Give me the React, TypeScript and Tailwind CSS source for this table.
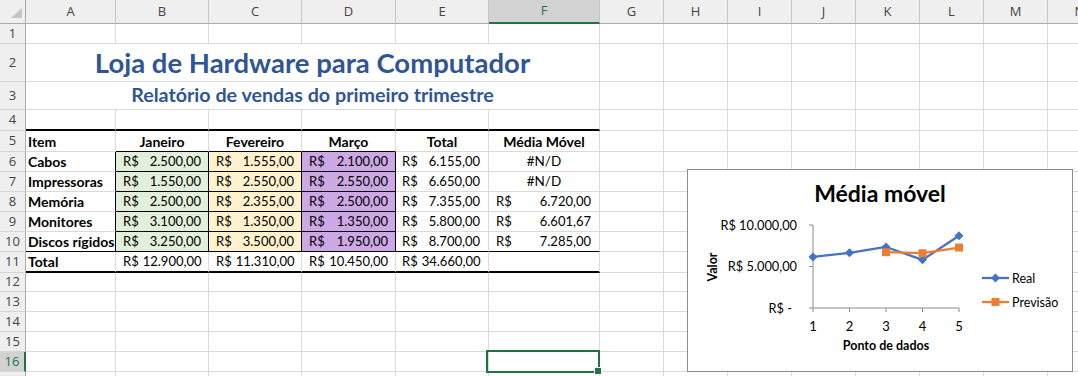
import React from 'react';
import { twMerge } from 'tailwind-merge';

const W = [
  'w-[90px]',
  'w-[93px]',
  'w-[93px]',
  'w-[94px]',
  'w-[93px]',
  'w-[111px]',
  'w-[64px]',
  'w-[64px]',
  'w-[64px]',
  'w-[64px]',
  'w-[64px]',
  'w-[64px]',
  'w-[64px]',
  'w-[64px]',
];
const LETTERS = ['A', 'B', 'C', 'D', 'E', 'F', 'G', 'H', 'I', 'J', 'K', 'L', 'M', 'N'];

function Cell({ i, className, children }: { i: number; className?: string; children?: React.ReactNode }) {
  return (
    <div
      className={twMerge(
        'shrink-0 h-full box-border border-r border-b border-r-[#DADADA] border-b-[#DADADA] overflow-hidden whitespace-nowrap flex items-center text-[14px] text-black',
        W[i],
        className
      )}
    >
      {children}
    </div>
  );
}

function RowHead({ n, sel }: { n: number; sel?: boolean }) {
  return (
    <div
      className={twMerge(
        'shrink-0 w-[26px] h-full box-border border-r border-b border-r-[#ABABAB] border-b-[#D4D4D4] bg-[#EFEFEF] flex items-center justify-center text-[13px] text-[#444] font-[family-name:Open_Sans,sans-serif]',
        sel ? 'bg-[#D2D2D2] border-r-2 border-r-[#217346] text-[#217346]' : ''
      )}
    >
      {n}
    </div>
  );
}

function Rest({ from }: { from: number }) {
  const out: React.ReactNode[] = [];
  for (let i = from; i < 14; i++) out.push(<Cell key={i} i={i} />);
  return <>{out}</>;
}

function Row({ n, h, children, sel, from = 0 }: { n: number; h: string; children?: React.ReactNode; sel?: boolean; from?: number }) {
  return (
    <div className={twMerge('flex shrink-0', h)}>
      <RowHead n={n} sel={sel} />
      {children}
      <Rest from={from} />
    </div>
  );
}

function Money({ v, className }: { v: string; className?: string }) {
  return (
    <div className={twMerge('flex w-full justify-between gap-[4px] pl-[7px] pr-[7px] text-[13px]', className)}>
      <span>R$</span>
      <span>{v}</span>
    </div>
  );
}

const GREEN = 'bg-[#E2EFDA] border-r-black border-b-black';
const YELLOW = 'bg-[#FFF2CC] border-r-black border-b-black';
const PURPLE = 'bg-[#CCA8E4] border-r-black border-b-black';

type DataRow = { label: string; b: string; c: string; d: string; e: string; f: string | null };

const DATA: DataRow[] = [
  { label: 'Cabos', b: '2.500,00', c: '1.555,00', d: '2.100,00', e: '6.155,00', f: null },
  { label: 'Impressoras', b: '1.550,00', c: '2.550,00', d: '2.550,00', e: '6.650,00', f: null },
  { label: 'Memória', b: '2.500,00', c: '2.355,00', d: '2.500,00', e: '7.355,00', f: '6.720,00' },
  { label: 'Monitores', b: '3.100,00', c: '1.350,00', d: '1.350,00', e: '5.800,00', f: '6.601,67' },
  { label: 'Discos rígidos', b: '3.250,00', c: '3.500,00', d: '1.950,00', e: '8.700,00', f: '7.285,00' },
];

function Chart() {
  const xs = [126, 162.5, 199, 235.5, 272];
  const yOf = (v: number) => 139 - (v * 83) / 10000;
  const real = [6155, 6650, 7355, 5800, 8700];
  const fc = [6720, 6601.67, 7285];
  const realPts = real.map((v, i) => `${xs[i]},${yOf(v)}`).join(' ');
  const fcPts = fc.map((v, i) => `${xs[i + 2]},${yOf(v)}`).join(' ');
  const diamond = (x: number, y: number, k: string) => (
    <polygon key={k} points={`${x},${y - 4.5} ${x + 4.5},${y} ${x},${y + 4.5} ${x - 4.5},${y}`} fill="#4472C4" />
  );
  const square = (x: number, y: number, k: string) => (
    <rect key={k} x={x - 4} y={y - 4} width={8} height={8} fill="#ED7D31" />
  );
  const font = 'Lato, sans-serif';
  return (
    <div className="absolute left-[687px] top-[169px] w-[386px] h-[203px] border border-[#8C8C8C] bg-white">
      <svg width={386} height={203} className="absolute -left-px -top-px overflow-visible">
        <text x={193} y={33} textAnchor="middle" fontFamily={font} fontWeight={700} fontSize={23} fill="#000">
          Média móvel
        </text>
        {/* axes */}
        <line x1={126} y1={56} x2={126} y2={139} stroke="#8C8C8C" strokeWidth={1} />
        <line x1={126} y1={139} x2={272} y2={139} stroke="#8C8C8C" strokeWidth={1} />
        {[56, 97.5, 139].map((y) => (
          <line key={y} x1={122} y1={y} x2={126} y2={y} stroke="#8C8C8C" strokeWidth={1} />
        ))}
        {xs.map((x) => (
          <line key={x} x1={x} y1={139} x2={x} y2={143} stroke="#8C8C8C" strokeWidth={1} />
        ))}
        {/* y labels */}
        <text x={110} y={60.5} textAnchor="end" fontFamily={font} fontSize={12.8} fill="#000">
          R$ 10.000,00
        </text>
        <text x={110} y={102} textAnchor="end" fontFamily={font} fontSize={12.8} fill="#000">
          R$ 5.000,00
        </text>
        <text x={105} y={143.5} textAnchor="end" fontFamily={font} fontSize={12.8} fill="#000">
          R$ -
        </text>
        {xs.map((x, i) => (
          <text key={i} x={x} y={161.5} textAnchor="middle" fontFamily={font} fontSize={13} fill="#000">
            {i + 1}
          </text>
        ))}
        <text x={199} y={181} textAnchor="middle" fontFamily={font} fontWeight={700} fontSize={12.5} fill="#000">
          Ponto de dados
        </text>
        <text
          x={30}
          y={98}
          textAnchor="middle"
          fontFamily={font}
          fontWeight={700}
          fontSize={12.5}
          fill="#000"
          transform="rotate(-90 30 98)"
        >
          Valor
        </text>
        {/* series */}
        <polyline points={realPts} fill="none" stroke="#4472C4" strokeWidth={2.25} strokeLinejoin="round" />
        <polyline points={fcPts} fill="none" stroke="#ED7D31" strokeWidth={2.25} strokeLinejoin="round" />
        {real.map((v, i) => diamond(xs[i], yOf(v), 'r' + i))}
        {fc.map((v, i) => square(xs[i + 2], yOf(v), 'f' + i))}
        {/* legend */}
        <line x1={295} y1={109} x2={322} y2={109} stroke="#4472C4" strokeWidth={2.25} />
        {diamond(308.5, 109, 'lg1')}
        <text x={325} y={113.5} fontFamily={font} fontSize={12.5} fill="#000">
          Real
        </text>
        <line x1={295} y1={133} x2={322} y2={133} stroke="#ED7D31" strokeWidth={2.25} />
        {square(308.5, 133, 'lg2')}
        <text x={325} y={137.5} fontFamily={font} fontSize={12.5} fill="#000">
          Previsão
        </text>
      </svg>
    </div>
  );
}

export default function App() {
  return (
    <div className="relative w-[1078px] h-[376px] overflow-hidden bg-white font-[family-name:Lato,sans-serif]">
      <div className="flex flex-col">
        {/* column header */}
        <div className="flex h-[24px] shrink-0">
          <div className="relative shrink-0 w-[26px] h-full box-border border-r border-b border-[#ABABAB] bg-[#EFEFEF]">
            <svg width={26} height={24} className="absolute left-0 top-0">
              <polygon points="22,8 22,18 11,18" fill="#C4C4C4" />
            </svg>
          </div>
          {LETTERS.map((l, i) => (
            <div
              key={l}
              className={twMerge(
                'shrink-0 h-full box-border border-r border-b border-r-[#C6C6C6] border-b-[#ABABAB] bg-[#EFEFEF] flex items-center justify-center text-[13px] text-[#444] font-[family-name:Open_Sans,sans-serif]',
                W[i],
                l === 'F' ? 'bg-[#D2D2D2] border-b-2 border-b-[#217346] text-[#217346]' : ''
              )}
            >
              {l}
            </div>
          ))}
        </div>

        <Row n={1} h="h-[20px]" />

        <Row n={2} h="h-[38px]" from={6}>
          <div className="shrink-0 w-[574px] h-full box-border border-r border-b border-r-[#DADADA] border-b-[#DADADA] flex items-end justify-center pb-[2px]">
            <span className="text-[27.5px] leading-none font-bold text-[#2F5597] pb-[3px]">Loja de Hardware para Computador</span>
          </div>
        </Row>

        <Row n={3} h="h-[28px]" from={6}>
          <div className="shrink-0 w-[574px] h-full box-border border-r border-b border-r-[#DADADA] border-b-[#DADADA] flex items-end justify-center">
            <span className="text-[19.7px] leading-none font-bold text-[#2F5597] pb-[4px]">Relatório de vendas do primeiro trimestre</span>
          </div>
        </Row>

        <Row n={4} h="h-[21px]" from={6}>
          {[0, 1, 2, 3, 4, 5].map((i) => (
            <Cell key={i} i={i} className="border-b-2 border-b-black" />
          ))}
        </Row>

        <Row n={5} h="h-[21px]" from={6}>
          <Cell i={0} className="font-bold pl-[2px]">
            Item
          </Cell>
          <Cell i={1} className="font-bold justify-center border-b-black">
            Janeiro
          </Cell>
          <Cell i={2} className="font-bold justify-center border-b-black">
            Fevereiro
          </Cell>
          <Cell i={3} className="font-bold justify-center border-b-black">
            Março
          </Cell>
          <Cell i={4} className="font-bold justify-center">
            Total
          </Cell>
          <Cell i={5} className="font-bold justify-center">
            Média Móvel
          </Cell>
        </Row>

        {DATA.map((r, idx) => {
          const last = idx === DATA.length - 1;
          const bb = last ? 'border-b-black' : '';
          return (
            <Row key={r.label} n={6 + idx} h="h-[20px]" from={6}>
              <Cell i={0} className={twMerge('font-bold pl-[2px] border-r-black', bb)}>
                {r.label}
              </Cell>
              <Cell i={1} className={GREEN}>
                <Money v={r.b} />
              </Cell>
              <Cell i={2} className={YELLOW}>
                <Money v={r.c} />
              </Cell>
              <Cell i={3} className={PURPLE}>
                <Money v={r.d} />
              </Cell>
              <Cell i={4} className={bb}>
                <Money v={r.e} className="pl-[6px] pr-[8px]" />
              </Cell>
              <Cell i={5} className={twMerge(r.f ? '' : 'justify-center', bb)}>
                {r.f ? <Money v={r.f} className="pr-[8px]" /> : <span className="text-[13.5px]">#N/D</span>}
              </Cell>
            </Row>
          );
        })}

        <Row n={11} h="h-[21px]" from={6}>
          <Cell i={0} className="font-bold pl-[2px] border-b-2 border-b-black">
            Total
          </Cell>
          <Cell i={1} className="border-b-2 border-b-black">
            <Money v="12.900,00" />
          </Cell>
          <Cell i={2} className="border-b-2 border-b-black">
            <Money v="11.310,00" />
          </Cell>
          <Cell i={3} className="border-b-2 border-b-black">
            <Money v="10.450,00" />
          </Cell>
          <Cell i={4} className="border-b-2 border-b-black">
            <Money v="34.660,00" className="pl-[6px] pr-[8px]" />
          </Cell>
          <Cell i={5} className="border-b-2 border-b-black" />
        </Row>

        <Row n={12} h="h-[19px]" />
        <Row n={13} h="h-[20px]" />
        <Row n={14} h="h-[20px]" />
        <Row n={15} h="h-[20px]" />
        <Row n={16} h="h-[20px]" sel />
        <Row n={17} h="h-[20px]" />
      </div>

      {/* selected cell F16 */}
      <div className="absolute left-[486px] top-[350px] w-[114px] h-[23px] border-2 border-[#217346]" />
      <div className="absolute left-[594px] top-[367px] w-[8px] h-[8px] bg-white p-px">
        <div className="w-full h-full bg-[#217346]" />
      </div>

      <Chart />
    </div>
  );
}
